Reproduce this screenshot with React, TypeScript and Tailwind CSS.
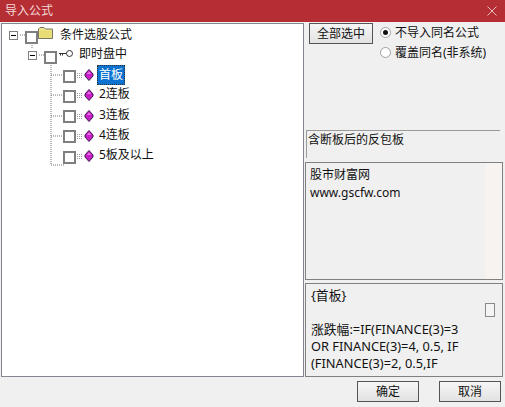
const FONT = "font-['Noto_Sans','Noto_Sans_CJK_SC',sans-serif]"

function Check() {
  return <span className="box-border block h-[13px] w-[13px] shrink-0 border-2 border-[#7f7f7f] bg-white" />
}

function Expander() {
  return (
    <svg width="9" height="9" className="shrink-0">
      <rect x="0.5" y="0.5" width="8" height="8" fill="#fff" stroke="#808080" />
      <path d="M2 4.5h5" stroke="#000" />
    </svg>
  )
}

function Folder() {
  return (
    <svg width="16" height="14" className="shrink-0">
      <path d="M.5 12.5V3L2 1.5h4L7.5 3h7v9.5z" fill="#efe68f" stroke="#77755f" />
      <path d="M1.5 4.5h12v7h-12z" fill="#e8dc74" />
    </svg>
  )
}

function KeyIcon() {
  return (
    <svg width="15" height="9" className="shrink-0">
      <circle cx="10.5" cy="4.5" r="3" fill="#fff" stroke="#333" />
      <path d="M0 4.5h7.5M1.5 4.5v2M3.5 4.5v2" stroke="#333" />
    </svg>
  )
}

function Gem() {
  return (
    <svg width="17" height="12" className="shrink-0">
      <path d="M0 4.5h5M0 6.5h5M0 8.5h5" stroke="#9a9a9a" strokeDasharray="1 1" />
      <path d="M12 .5l4 4.500v2L12 11.500 8 7V5z" fill="#c81fc8" stroke="#3a1a4a" />
      <path d="M10 5l2-2.500 2 2.500z" fill="#e77ae7" />
    </svg>
  )
}

const LEAVES = ['首板', '2连板', '3连板', '4连板', '5板及以上']

function TreePanel() {
  return (
    <div className="relative flex-1 border border-[#828790] bg-white pl-[7px] pt-[1px] text-[12px] text-[#111]">
      {/* dotted connectors */}
      <svg className="absolute left-0 top-0" width="80" height="150">
        <path
          d="M18 11h6M30 19v6M37 31h6M49 39v102h13M49 51h13M49 71h13M49 92h13M49 112h13"
          fill="none"
          stroke="#777"
          strokeDasharray="1 1"
        />
      </svg>
      <div className="relative flex h-5 items-center">
        <Expander />
        <span className="ml-[7px] mt-1"><Check /></span>
        <span className="mt-[-4px] flex items-center"><Folder /></span>
        <span className="ml-[6px] mt-[-1px]">条件选股公式</span>
      </div>
      <div className="relative flex h-5 items-center pl-[19px]">
        <Expander />
        <span className="ml-[7px] mt-1"><Check /></span>
        <span className="mb-1 ml-[2px] flex items-center"><KeyIcon /></span>
        <span className="ml-[5px] mt-[-2px]">即时盘中</span>
      </div>
      {LEAVES.map((name, i) => (
        <div key={name} className="relative flex h-[20.25px] items-center pl-[54px]">
          <span className="mt-[2px]"><Check /></span>
          <span className="ml-[1px]"><Gem /></span>
          {i === 0 ? (
            <span className="ml-[3px] flex h-[20px] items-center border border-dotted border-[#333] bg-[#0b73cf] px-[1px] text-white">
              {name}
            </span>
          ) : (
            <span className="ml-[5px] mt-[-2px]">{name}</span>
          )}
        </div>
      ))}
    </div>
  )
}

function Radio({ checked }: { checked?: boolean }) {
  return (
    <span className="flex h-[11px] w-[11px] shrink-0 items-center justify-center rounded-full border border-[#a0a0a0] bg-white">
      {checked && <span className="h-[5px] w-[5px] rounded-full bg-[#111]" />}
    </span>
  )
}

function Btn({ label, className }: { label: string; className: string }) {
  return (
    <button className={`box-border border border-[#555] bg-gradient-to-b from-[#f6f6f6] to-[#e2e2e2] text-[12px] text-[#111] ${className}`}>
      {label}
    </button>
  )
}

function RightPanel() {
  return (
    <div className="flex w-[198px] shrink-0 flex-col text-[12px] text-[#111]">
      <div className="flex h-[107px] pl-[4px]">
        <Btn label="全部选中" className="h-[21px] w-[64px]" />
        <div className="ml-[7px] flex flex-col gap-[1px]">
          <label className="flex h-[19px] items-center gap-[4px]"><Radio checked />不导入同名公式</label>
          <label className="flex h-[19px] items-center gap-[4px]"><Radio />覆盖同名(非系统)</label>
        </div>
      </div>
      <div className="ml-[1px] h-[28px] w-[194px] border-l border-t border-[#9a9a9a] pl-[1px] leading-[18px]">含断板后的反包板</div>
      <div className="mt-[4px] h-[118px] border border-[#808080] bg-[#f0f0f0]">
        <div className="flex h-full">
          <div className="flex-1 px-[4px] pt-[3px] leading-[18px]">
            <p>股市财富网</p>
            <p>www.gscfw.com</p>
          </div>
          <div className="w-[17px] bg-[#f6f3f0]" />
        </div>
      </div>
      <div className="relative mt-[3px] h-[94px] border border-[#808080] bg-[#f0f0f0] px-[5px] pt-[3px] text-[12.800px] leading-[17px]">
        <p>{'{首板}'}</p>
        <p className="mt-[17px] w-[160px]">涨跌幅:=IF(FINANCE(3)=3 OR FINANCE(3)=4, 0.5, IF (FINANCE(3)=2, 0.5,IF</p>
        <span className="absolute left-[179px] top-[19px] h-[14px] w-[10px] border border-[#8a8a8a] bg-[#f4f4f4]" />
      </div>
    </div>
  )
}

export default function App() {
  return (
    <div className={`flex h-[407px] w-[505px] flex-col overflow-hidden bg-[#f0f0f0] ${FONT}`}>
      <div className="flex h-[22px] shrink-0 items-center justify-between bg-[#b52e33] pl-[5px] pr-[8px] text-[12px] text-[#f3d9da]">
        <span>导入公式</span>
        <svg width="10" height="10"><path d="M.5.500l9 9M9.500.500l-9 9" stroke="#e8bfc1" /></svg>
      </div>
      <div className="flex h-[355px] shrink-0 gap-[1px] pl-[1px] pr-[2px] pt-[1px]">
        <TreePanel />
        <RightPanel />
      </div>
      <div className="flex flex-1 items-start justify-end gap-[20px] pr-[4px] pt-[4px]">
        <Btn label="确定" className="h-[21px] w-[62px]" />
        <Btn label="取消" className="h-[21px] w-[62px]" />
      </div>
    </div>
  )
}
